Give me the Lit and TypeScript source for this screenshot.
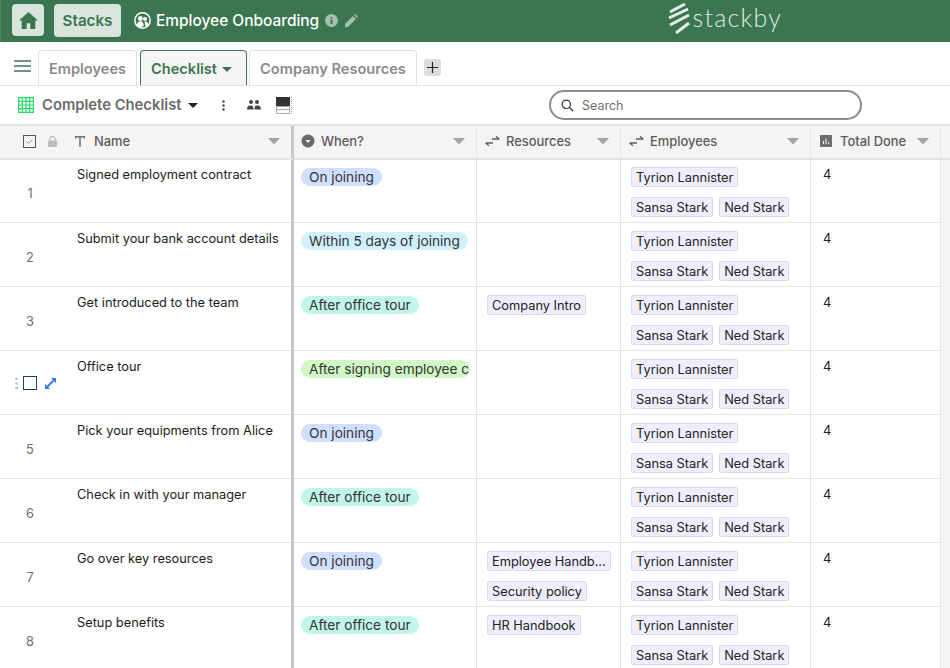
import { LitElement, html, css } from "lit";
import { customElement } from "lit/decorators.js";

type Row = { n: string; name: string; when: string; tone: string; res: string[] };
const rows: Row[] = [
  { n: "1", name: "Signed employment contract", when: "On joining", tone: "blue", res: [] },
  { n: "2", name: "Submit your bank account details", when: "Within 5 days of joining", tone: "cyan", res: [] },
  { n: "3", name: "Get introduced to the team", when: "After office tour", tone: "teal", res: ["Company Intro"] },
  { n: "", name: "Office tour", when: "After signing employee contract", tone: "green", res: [] },
  { n: "5", name: "Pick your equipments from Alice", when: "On joining", tone: "blue", res: [] },
  { n: "6", name: "Check in with your manager", when: "After office tour", tone: "teal", res: [] },
  { n: "7", name: "Go over key resources", when: "On joining", tone: "blue", res: ["Employee Handb...", "Security policy"] },
  { n: "8", name: "Setup benefits", when: "After office tour", tone: "teal", res: ["HR Handbook"] },
];

const caret = html`<svg class="caret" width="12" height="7" viewBox="0 0 12 7"><path d="M0 0h12L6 6.5z" fill="#a3a3a3"/></svg>`;
const link = html`<svg class="hicon" width="15" height="10" viewBox="0 0 15 10"><path d="M7 3h7.300M11 .3 14.300 3M8 7H.7M4 9.700.7 7" stroke="#5e5e5e" stroke-width="1.300" fill="none"/></svg>`;

@customElement("app-root")
export class AppRoot extends LitElement {
  static styles = css`
    :host { display: block; width: 950px; height: 668px; overflow: hidden; background: #fff; font-family: Inter, "Liberation Sans", sans-serif; color: #1c1c1c; }
    svg { display: block; flex: none; }
    .top { height: 42px; padding-bottom: 2px; background: #3b7650; display: flex; align-items: center; border-left: 1px solid #4f8563; box-sizing: border-box; }
    .home { width: 32px; height: 32px; border-radius: 4px; background: #d9e4dd; margin-left: 11px; display: flex; align-items: center; justify-content: center; }
    .stacks { width: 67px; height: 33px; border-radius: 4px; background: #d9e4dd; margin-left: 10px; display: flex; align-items: center; justify-content: center; color: #3b7650; font-size: 15.2px; font-weight: 600; }
    .title { color: #fff; font-size: 15.45px; font-weight: 500; margin-left: 5px; white-space: nowrap; }
    .globe { margin-left: 13px; }
    .info { margin-left: 6px; }
    .pencil { margin-left: 7px; }
    .logo { margin-left: auto; margin-right: 168px; margin-bottom: 4px; display: flex; align-items: center; gap: 3px; color: #dfe9e3; font-family: Lato, sans-serif; font-size: 25px; font-weight: 300; letter-spacing: 1.2px; line-height: 30px; }
    .logo span { margin-bottom: 2px; }
    .tabs { height: 44px; border-bottom: 1px solid #e2e2e2; box-sizing: border-box; display: flex; align-items: flex-end; }
    .menu { margin: 4px 7px 0 14px; align-self: center; }
    .tab { height: 35px; padding-top: 2px; box-sizing: border-box; border: 1px solid #e0e0e0; border-bottom: none; border-radius: 4px 4px 0 0; display: flex; align-items: center; justify-content: center; color: #8a8a8a; font-size: 14.6px; font-weight: 600; margin-right: 2px; white-space: nowrap; }
    .tab.on { margin-left: 1px; border: 1px solid #3b7650; border-bottom: none; background: #f5f5f5; color: #3b7650; gap: 5px; justify-content: flex-start; padding-left: 10px; }
    .plus { width: 17px; height: 17px; border-radius: 3px; background: #dcdcdc; align-self: center; margin: 8px 0 0 5px; display: flex; align-items: center; justify-content: center; }
    .bar { height: 40px; border-bottom: 2px solid #e4e4e4; box-sizing: border-box; display: flex; align-items: center; }
    .vname { font-size: 14.8px; font-weight: 600; color: #6b6b6b; margin-left: 8px; white-space: nowrap; }
    .search { margin-left: auto; margin-right: 88px; width: 313px; height: 30px; box-sizing: border-box; border: 2px solid #8c8c8c; border-radius: 15px; display: flex; align-items: center; padding-left: 10px; gap: 8px; font-size: 12.5px; color: #6f6f6f; }
    .grid { display: grid; grid-template-columns: 294px 183px 144px 190px 130px 9px; }
    .h { height: 34px; padding-bottom: 2px; background: #f4f4f4; border-bottom: 2px solid #e4e4e4; border-right: 1px solid #e4e4e4; box-sizing: border-box; display: flex; align-items: center; font-size: 12.9px; font-weight: 500; color: #5c5c5c; }
    .h .lbl { flex: 1; margin-left: 6px; white-space: nowrap; }
    .h .caret { margin-right: 11px; }
    .hicon { margin-left: 8px; }
    .h.first { border-right: 3px solid #c8c8c8; }
    .c { height: 64px; box-sizing: border-box; border-right: 1px solid #e4e4e4; font-size: 12.8px; line-height: 16px; background: linear-gradient(#e4e4e4, #e4e4e4) left 0 bottom 1px / 100% 1px no-repeat; }
    .c.first { border-right: 3px solid #c8c8c8; display: flex; }
    .num { width: 60px; text-align: center; color: #6e6e6e; padding-top: 26px; box-sizing: border-box; flex: none; }
    .idx { display: flex; width: 60px; flex: none; align-items: center; padding-left: 15px; box-sizing: border-box; height: 62px; }
    .nm { margin-left: 17px; padding-top: 7px; color: #1c1c1c; white-space: nowrap; }
    .pillc { padding: 8px 5px 0 7px; }
    .pill { display: inline-block; max-width: 169px; box-sizing: border-box; overflow: hidden; white-space: nowrap; height: 18px; line-height: 18px; border-radius: 9px; padding: 0 8px; font-size: 13.65px; color: #333; vertical-align: top; }
    .blue { background: #cfdfff; }
    .cyan { background: #d0f0fd; }
    .teal { background: #c2f5e9; }
    .green { background: #d1f7c4; padding-right: 0; }
    .chips { display: flex; flex-wrap: wrap; gap: 10px 6px; padding: 7px 8px 0 10px; align-content: flex-start; }
    .chip { height: 20px; box-sizing: border-box; line-height: 20px; border: 1px solid #d7d7f5; background: #eeeefc; border-radius: 2px; padding: 0 4px; font-size: 12.8px; color: #222; white-space: nowrap; }
    .tot { padding: 7px 0 0 12px; }
    .side { background: #f4f4f4; border-right: none; }
  `;

  render() {
    return html`
      <div class="top">
        <div class="home"><svg width="19" height="17" viewBox="0 0 19 17"><path d="M9.500 0 0 8.600h2.700V17h5v-5.700h3.600V17h5V8.600H19z" fill="#3b7650"/></svg></div>
        <div class="stacks">Stacks</div>
        <svg class="globe" width="17" height="17" viewBox="0 0 17 17"><circle cx="8.500" cy="8.500" r="7.700" fill="#3b7650" stroke="#fff" stroke-width="1.500"/><circle cx="6.300" cy="6.500" r="2.400" fill="#fff"/><circle cx="11" cy="7" r="2" fill="#fff"/><path d="M2.800 13.500c.3-3 1.800-4.200 3.500-4.200s3.200 1.200 3.500 4.800L6.500 15.500zM10.500 9.600c1.800-.5 3.500.6 3.800 3.200l-2.800 2z" fill="#fff"/></svg>
        <div class="title">Employee Onboarding</div>
        <svg class="info" width="13" height="13" viewBox="0 0 13 13"><circle cx="6.500" cy="6.500" r="6.500" fill="#a5c0af"/><path d="M5.500 5.500h2V10h-2zM5.500 3h2v1.600h-2z" fill="#3b7650"/></svg>
        <svg class="pencil" width="13" height="13" viewBox="0 0 13 13"><path d="M0 13V10L8 2l3 3-8 8zM9 1l1-1 3 3-1 1z" fill="#a5c0af"/></svg>
        <div class="logo">
          <svg width="22" height="31" viewBox="0 0 22 31"><path d="M2 9 17 1M1 15 20 6M2 22 21 12M8 30 21 20" stroke="#e6eee9" stroke-width="3" fill="none"/></svg>
          <span>stackby</span>
        </div>
      </div>
      <div class="tabs">
        <svg class="menu" width="17" height="12" viewBox="0 0 17 12"><path d="M0 1h17M0 6h17M0 11h17" stroke="#3b7650" stroke-width="1.500"/></svg>
        <div class="tab" style="width:99px">Employees</div>
        <div class="tab on" style="width:107px">Checklist<svg width="10" height="5" viewBox="0 0 10 5"><path d="M0 0h10L5 5z" fill="#3b7650"/></svg></div>
        <div class="tab" style="width:168px">Company Resources</div>
        <div class="plus"><svg width="11" height="11" viewBox="0 0 11 11"><path d="M5.500 0v11M0 5.500h11" stroke="#222" stroke-width="1.200"/></svg></div>
      </div>
      <div class="bar">
        <svg style="margin-left:18px" width="16" height="16" viewBox="0 0 16 16"><path d="M.6.600h14.800v14.800H.6zM4.300.6v14.800M8 .6v14.800M11.700.6v14.800M.6 4.300h14.800M.6 8h14.800M.6 11.700h14.800" fill="none" stroke="#1fdc63" stroke-width="1.200"/></svg>
        <div class="vname">Complete Checklist</div>
        <svg style="margin-left:6px" width="10" height="5" viewBox="0 0 10 5"><path d="M0 0h10L5 5z" fill="#222"/></svg>
        <svg style="margin-left:24px" width="3" height="11" viewBox="0 0 3 11"><circle cx="1.500" cy="1.500" r="1.200" fill="#444"/><circle cx="1.500" cy="5.500" r="1.200" fill="#444"/><circle cx="1.500" cy="9.500" r="1.200" fill="#444"/></svg>
        <svg style="margin-left:22px" width="14" height="10" viewBox="0 0 14 10"><circle cx="4" cy="2" r="2" fill="#444"/><circle cx="10" cy="2" r="2" fill="#444"/><path d="M0 9.500c0-3.500 2-4 3.500-4s3 .6 3 4zM7.500 9.500c0-3.500 1-4 2.500-4 2 0 4 .5 4 4z" fill="#444"/></svg>
        <svg style="margin-left:15px" width="16" height="17" viewBox="0 0 16 17"><rect width="14" height="9" fill="#333"/><path d="M.5 9.500h13v3H.5zM.5 12.500h13v4H.5z" fill="none" stroke="#aaa"/><path d="M15.500 0v17" stroke="#999" stroke-dasharray="1 1"/></svg>
        <div class="search">
          <svg width="13" height="13" viewBox="0 0 13 13"><circle cx="5.300" cy="5.300" r="4.200" fill="none" stroke="#333" stroke-width="1.200"/><path d="M8.400 8.400 12 12" stroke="#333" stroke-width="1.300"/></svg>
          <span>Search</span>
        </div>
      </div>
      <div class="grid">
        <div class="h first">
          <svg style="margin-left:23px" width="13" height="13" viewBox="0 0 13 13"><rect x=".5" y=".5" width="12" height="12" fill="none" stroke="#555"/><path d="m3.500 6.500 2 2 4-4" fill="none" stroke="#999"/></svg>
          <svg style="margin-left:12px" width="9" height="11" viewBox="0 0 9 11"><rect y="4.500" width="9" height="6.500" rx="1" fill="#bdbdbd"/><path d="M2 5V3a2.500 2.500 0 0 1 5 0v2" fill="none" stroke="#bdbdbd" stroke-width="1.200"/></svg>
          <svg style="margin-left:18px" width="10" height="11" viewBox="0 0 10 11"><path d="M.7 2.500V.8h8.600v1.700M5 .8V11" fill="none" stroke="#6e6e6e" stroke-width="1.500"/></svg>
          <span class="lbl" style="margin-left:9px">Name</span>${caret}
        </div>
        <div class="h">
          <svg class="hicon" style="margin-left:7px" width="14" height="14" viewBox="0 0 14 14"><circle cx="7" cy="7" r="6.500" fill="#6a6a6a"/><path d="M4.500 6h5L7 9z" fill="#f4f4f4"/></svg>
          <span class="lbl">When?</span>${caret}
        </div>
        <div class="h">${link}<span class="lbl">Resources</span>${caret}</div>
        <div class="h">${link}<span class="lbl">Employees</span>${caret}</div>
        <div class="h">
          <svg class="hicon" style="margin-left:9px" width="12" height="12" viewBox="0 0 12 12"><rect width="12" height="12" rx="1" fill="#6e6e6e"/><path d="M3.500 9V6M6 9V3.500M8.500 9V7.500" stroke="#f4f4f4"/></svg>
          <span class="lbl" style="margin-left:8px">Total Done</span>${caret}
        </div>
        <div class="h side"></div>
        ${rows.map((r) => html`
          <div class="c first">
            ${r.n
              ? html`<div class="num">${r.n}</div>`
              : html`<div class="idx">
                  <svg width="3" height="13" viewBox="0 0 3 13"><circle cx="1.500" cy="2" r="1.300" fill="#bbb"/><circle cx="1.500" cy="6.500" r="1.300" fill="#bbb"/><circle cx="1.500" cy="11" r="1.300" fill="#bbb"/></svg>
                  <svg style="margin-left:5px" width="14" height="14" viewBox="0 0 14 14"><rect x=".5" y=".5" width="13" height="13" fill="#fff" stroke="#1e3f78"/></svg>
                  <svg style="margin-left:8px" width="11" height="11" viewBox="0 0 11 11"><path d="M6 0h5v5ZM0 6v5h5Z" fill="#2f7cf6"/><path d="M2.500 8.500l6-6" stroke="#2f7cf6" stroke-width="2"/></svg>
                </div>`}
            <div class="nm">${r.name}</div>
          </div>
          <div class="c pillc"><span class="pill ${r.tone}">${r.when}</span></div>
          <div class="c chips">${r.res.map((x) => html`<span class="chip">${x}</span>`)}</div>
          <div class="c chips">
            <span class="chip">Tyrion Lannister</span><span class="chip">Sansa Stark</span><span class="chip">Ned Stark</span>
          </div>
          <div class="c tot">4</div>
          <div class="side"></div>
        `)}
      </div>
    `;
  }
}
